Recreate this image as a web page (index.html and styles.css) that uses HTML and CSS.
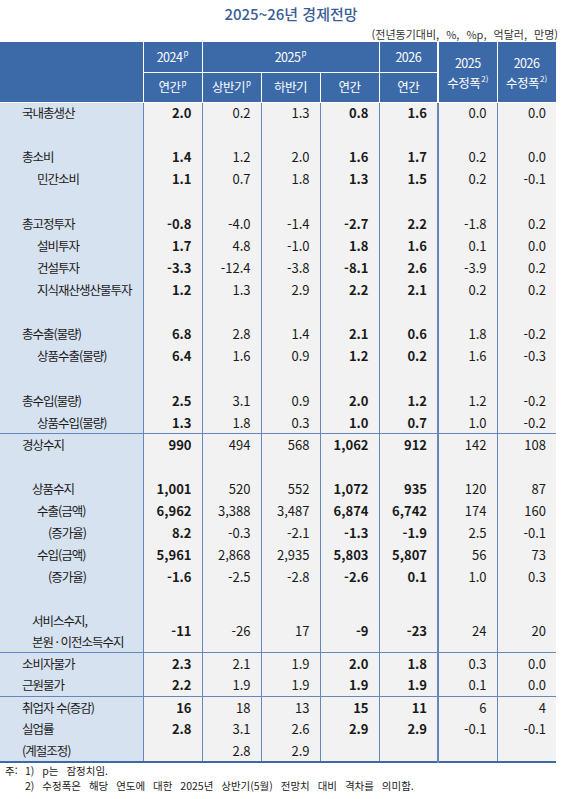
FILE: index.html
```html
<!DOCTYPE html>
<html lang="ko">
<head>
<meta charset="utf-8">
<title>2025~26년 경제전망</title>
<link rel="stylesheet" href="styles.css">
</head>
<body>
<div class="title">2025~26년 경제전망</div>
<div class="unit">(전년동기대비, %, %p, 억달러, 만명)</div>
<table class="tbl">
  <colgroup>
    <col class="c-lab"><col class="c-d"><col class="c-d"><col class="c-d"><col class="c-d"><col class="c-d"><col class="c-d"><col class="c-d">
  </colgroup>
  <thead>
    <tr class="hr1">
      <th rowspan="2" class="h-lab"></th>
      <th>2024<sup class="sp">p</sup></th>
      <th colspan="3">2025<sup class="sp">p</sup></th>
      <th>2026</th>
      <th rowspan="2" class="h-rev dbl">2025<br>수정폭<sup class="sp">2)</sup></th>
      <th rowspan="2" class="h-rev">2026<br>수정폭<sup class="sp">2)</sup></th>
    </tr>
    <tr class="hr2">
      <th>연간<sup class="sp">p</sup></th>
      <th>상반기<sup class="sp">p</sup></th>
      <th>하반기</th>
      <th>연간</th>
      <th>연간</th>
    </tr>
  </thead>
  <tbody class="g1">
    <tr><td class="l">국내총생산</td><td class="b">2.0</td><td>0.2</td><td>1.3</td><td class="b">0.8</td><td class="b">1.6</td><td class="dbl">0.0</td><td>0.0</td></tr>
    <tr><td class="l"></td><td></td><td></td><td></td><td></td><td></td><td class="dbl"></td><td></td></tr>
    <tr><td class="l">총소비</td><td class="b">1.4</td><td>1.2</td><td>2.0</td><td class="b">1.6</td><td class="b">1.7</td><td class="dbl">0.2</td><td>0.0</td></tr>
    <tr><td class="l i1">민간소비</td><td class="b">1.1</td><td>0.7</td><td>1.8</td><td class="b">1.3</td><td class="b">1.5</td><td class="dbl">0.2</td><td>-0.1</td></tr>
    <tr><td class="l"></td><td></td><td></td><td></td><td></td><td></td><td class="dbl"></td><td></td></tr>
    <tr><td class="l">총고정투자</td><td class="b">-0.8</td><td>-4.0</td><td>-1.4</td><td class="b">-2.7</td><td class="b">2.2</td><td class="dbl">-1.8</td><td>0.2</td></tr>
    <tr><td class="l i1">설비투자</td><td class="b">1.7</td><td>4.8</td><td>-1.0</td><td class="b">1.8</td><td class="b">1.6</td><td class="dbl">0.1</td><td>0.0</td></tr>
    <tr><td class="l i1">건설투자</td><td class="b">-3.3</td><td>-12.4</td><td>-3.8</td><td class="b">-8.1</td><td class="b">2.6</td><td class="dbl">-3.9</td><td>0.2</td></tr>
    <tr><td class="l i1">지식재산생산물투자</td><td class="b">1.2</td><td>1.3</td><td>2.9</td><td class="b">2.2</td><td class="b">2.1</td><td class="dbl">0.2</td><td>0.2</td></tr>
    <tr><td class="l"></td><td></td><td></td><td></td><td></td><td></td><td class="dbl"></td><td></td></tr>
    <tr><td class="l">총수출(물량)</td><td class="b">6.8</td><td>2.8</td><td>1.4</td><td class="b">2.1</td><td class="b">0.6</td><td class="dbl">1.8</td><td>-0.2</td></tr>
    <tr><td class="l i1">상품수출(물량)</td><td class="b">6.4</td><td>1.6</td><td>0.9</td><td class="b">1.2</td><td class="b">0.2</td><td class="dbl">1.6</td><td>-0.3</td></tr>
    <tr><td class="l"></td><td></td><td></td><td></td><td></td><td></td><td class="dbl"></td><td></td></tr>
    <tr><td class="l">총수입(물량)</td><td class="b">2.5</td><td>3.1</td><td>0.9</td><td class="b">2.0</td><td class="b">1.2</td><td class="dbl">1.2</td><td>-0.2</td></tr>
    <tr><td class="l i1">상품수입(물량)</td><td class="b">1.3</td><td>1.8</td><td>0.3</td><td class="b">1.0</td><td class="b">0.7</td><td class="dbl">1.0</td><td>-0.2</td></tr>
  </tbody>
  <tbody>
    <tr><td class="l">경상수지</td><td class="b">990</td><td>494</td><td>568</td><td class="b">1,062</td><td class="b">912</td><td class="dbl">142</td><td>108</td></tr>
    <tr><td class="l"></td><td></td><td></td><td></td><td></td><td></td><td class="dbl"></td><td></td></tr>
    <tr><td class="l i2">상품수지</td><td class="b">1,001</td><td>520</td><td>552</td><td class="b">1,072</td><td class="b">935</td><td class="dbl">120</td><td>87</td></tr>
    <tr><td class="l i1">수출(금액)</td><td class="b">6,962</td><td>3,388</td><td>3,487</td><td class="b">6,874</td><td class="b">6,742</td><td class="dbl">174</td><td>160</td></tr>
    <tr><td class="l i3">(증가율)</td><td class="b">8.2</td><td>-0.3</td><td>-2.1</td><td class="b">-1.3</td><td class="b">-1.9</td><td class="dbl">2.5</td><td>-0.1</td></tr>
    <tr><td class="l i1">수입(금액)</td><td class="b">5,961</td><td>2,868</td><td>2,935</td><td class="b">5,803</td><td class="b">5,807</td><td class="dbl">56</td><td>73</td></tr>
    <tr><td class="l i3">(증가율)</td><td class="b">-1.6</td><td>-2.5</td><td>-2.8</td><td class="b">-2.6</td><td class="b">0.1</td><td class="dbl">1.0</td><td>0.3</td></tr>
    <tr><td class="l"></td><td></td><td></td><td></td><td></td><td></td><td class="dbl"></td><td></td></tr>
    <tr class="tall"><td class="l i2 two">서비스수지,<br>본원 · 이전소득수지</td><td class="b">-11</td><td>-26</td><td>17</td><td class="b">-9</td><td class="b">-23</td><td class="dbl">24</td><td>20</td></tr>
  </tbody>
  <tbody>
    <tr><td class="l">소비자물가</td><td class="b">2.3</td><td>2.1</td><td>1.9</td><td class="b">2.0</td><td class="b">1.8</td><td class="dbl">0.3</td><td>0.0</td></tr>
    <tr><td class="l">근원물가</td><td class="b">2.2</td><td>1.9</td><td>1.9</td><td class="b">1.9</td><td class="b">1.9</td><td class="dbl">0.1</td><td>0.0</td></tr>
  </tbody>
  <tbody>
    <tr><td class="l">취업자 수(증감)</td><td class="b">16</td><td>18</td><td>13</td><td class="b">15</td><td class="b">11</td><td class="dbl">6</td><td>4</td></tr>
    <tr><td class="l">실업률</td><td class="b">2.8</td><td>3.1</td><td>2.6</td><td class="b">2.9</td><td class="b">2.9</td><td class="dbl">-0.1</td><td>-0.1</td></tr>
    <tr><td class="l">(계절조정)</td><td class="b"></td><td>2.8</td><td>2.9</td><td class="b"></td><td class="b"></td><td class="dbl"></td><td></td></tr>
  </tbody>
</table>
<div class="notes">
  <span class="nk">주:</span>
  <div class="nlist">
    <div>1) p는 잠정치임.</div>
    <div>2) 수정폭은 해당 연도에 대한 2025년 상반기(5월) 전망치 대비 격차를 의미함.</div>
  </div>
</div>
</body>
</html>
```
FILE: styles.css
```css
* { box-sizing: border-box; }

body {
  margin: 0;
  width: 565px;
  font-family: "Noto Sans CJK KR", "Noto Sans", sans-serif;
  font-size: 13px;
  color: #1a1a1a;
  background: #fff;
}

.title {
  height: 26px;
  line-height: 28px;
  width: 556px;
  padding-left: 26px;
  text-align: center;
  font-size: 15px;
  font-weight: 500;
  color: #3a5d96;
}

.unit {
  height: 16px;
  line-height: 16px;
  width: 558px;
  text-align: right;
  font-size: 11px;
  color: #333;
  word-spacing: 4px;
}

.tbl {
  border-collapse: collapse;
  table-layout: fixed;
  width: 556px;
  border-bottom: 2px solid #3c6aa8;
}

.c-lab { width: 143px; }
.c-d { width: 59px; }

.tbl th {
  padding: 0;
  background: #3c6aa8;
  color: #fff;
  font-weight: 400;
  font-size: 12.5px;
  letter-spacing: -0.5px;
  text-align: center;
  border: 1px solid #fff;
  border-top: 0;
  line-height: 18px;
}

.tbl .hr1 th { height: 30px; }
.tbl .hr2 th { height: 30px; }

.tbl th.h-lab { border-left: 0; }
.tbl th.h-rev { line-height: 20px; padding-top: 2px; }
.tbl th.dbl { border-left: 2px solid #fff; }

.sp {
  font-size: 8px;
  line-height: 0;
  vertical-align: 6px;
  margin-left: 1px;
  letter-spacing: 0;
}

.tbl td {
  height: 22px;
  padding: 0 10px 0 0;
  text-align: right;
  background: #f2f2f2;
  border-left: 1px solid #6587bb;
  line-height: 20px;
  white-space: nowrap;
}

.tbl .g1 td { height: 22.13px; }

.tbl td.l {
  text-align: left;
  background: #d7e2f0;
  border-left: 0;
  padding-left: 22px;
  font-size: 12.5px;
  letter-spacing: -1px;
}

.tbl td.i1 { padding-left: 37px; }
.tbl td.i2 { padding-left: 32px; }
.tbl td.i3 { padding-left: 48px; }

.tbl td.dbl { border-left: 2px solid #6587bb; }

.tbl td.b { font-weight: 700; }

.tbl tr.tall td { height: 40px; }
.tbl td.two { line-height: 21px; }

.tbl tbody + tbody tr:first-child td { border-top: 1px solid #6587bb; }

.notes {
  display: flex;
  padding: 0 0 0 5px;
  font-size: 10.5px;
  line-height: 15px;
  color: #222;
  word-spacing: 5px;
}

.nk { width: 20px; flex: none; }
```
